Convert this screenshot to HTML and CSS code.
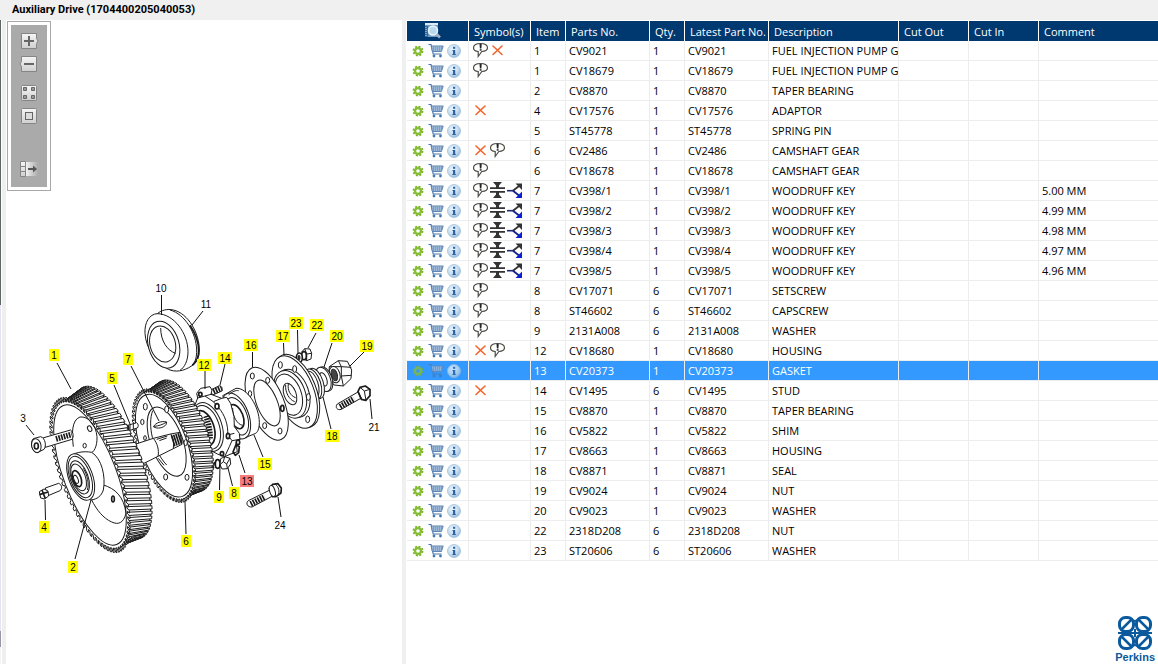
FILE: index.html
```html
<!DOCTYPE html>
<html lang="en">
<head>
<meta charset="utf-8">
<title>Auxiliary Drive</title>
<link rel="stylesheet" href="styles.css">
</head>
<body>
<svg class="defs" aria-hidden="true">
  <defs>
    <linearGradient id="tile" x1="0" y1="0" x2="0" y2="1"><stop offset="0" stop-color="#f6f6f6"/><stop offset="1" stop-color="#cfcfcf"/></linearGradient>
    <linearGradient id="fade" x1="0" y1="0" x2="1" y2="0"><stop offset="0" stop-color="#f2f2f2"/><stop offset="1" stop-color="#aaaaaa"/></linearGradient>
    <radialGradient id="ball" cx=".4" cy=".35" r=".7"><stop offset="0" stop-color="#eef6fb"/><stop offset=".6" stop-color="#c3dcee"/><stop offset="1" stop-color="#8fb6d6"/></radialGradient>
    <symbol id="i-gear" viewBox="0 0 18 18">
      <circle cx="9" cy="9" r="4.6" fill="none" stroke="#7ab32d" stroke-width="1.6" stroke-dasharray="2 1.61"/>
      <circle cx="9" cy="9" r="3" fill="none" stroke="#86bd35" stroke-width="2.4"/>
    </symbol>
    <symbol id="i-cart" viewBox="0 0 18 18">
      <path d="M1.500 2.500H4L6.200 12H14.500" fill="none" stroke="#4d78ac" stroke-width="1.200"/>
      <path d="M4.200 4H16.200L14.400 9.500H5.400Z" fill="#b9cde3" stroke="#5b83b3" stroke-width="1"/>
      <path d="M6.500 4V9.500M8.500 4V9.500M10.500 4V9.500M12.500 4V9.500M14.500 4V9.500M4.800 6H16M5 8H15" stroke="#6f94c0" stroke-width=".7"/>
      <circle cx="7" cy="14" r="1.400" fill="#4379b5"/><circle cx="13.500" cy="14" r="1.400" fill="#4379b5"/>
    </symbol>
    <symbol id="i-info" viewBox="0 0 18 18">
      <circle cx="9" cy="9" r="6.5" fill="url(#ball)" stroke="#a3c2da" stroke-width=".8"/>
      <rect x="8" y="4.8" width="2.2" height="2" fill="#2d63a8"/>
      <path d="M7.2 8H10.2V12.2H11V13H7.2V12.2H8V8.8H7.2Z" fill="#2d63a8"/>
    </symbol>
    <symbol id="i-note" viewBox="0 0 17 19">
      <path d="M8.500 2.500C4.500 2.500 1.500 4 1.500 6.700C1.500 9 3.600 10.200 6.200 10.500V15.500L9.800 10.500C13 10.200 15.500 9 15.500 6.700C15.500 4 12.500 2.500 8.500 2.500Z" fill="#fff" stroke="#4d4d45" stroke-width="1.200"/>
      <path d="M7.500 3H9.700L9.400 7.500H7.900Z" fill="#222"/><rect x="7.700" y="8.200" width="1.900" height="1.500" fill="#222"/>
    </symbol>
    <symbol id="i-cross" viewBox="0 0 17 19">
      <path d="M4 5L13 13.5M13 5L4 13.5" stroke="#f0642c" stroke-width="1.6" stroke-linecap="round"/>
    </symbol>
    <symbol id="i-press" viewBox="0 0 17 19">
      <path d="M4 1H13L10 4.500V7H7V4.500Z M4 17H13L10 13.500V11H7V13.500Z" fill="#333"/>
      <path d="M1 7.200H16M1 10.800H16" stroke="#333" stroke-width="1.700"/>
      <path d="M1 9H16" stroke="#fff" stroke-width="1.200"/>
    </symbol>
    <symbol id="i-branch" viewBox="0 0 17 19">
      <path d="M1 9.700H8" stroke="#1c2a78" stroke-width="1.600"/>
      <path d="M7 9.700L13 5" stroke="#333" stroke-width="1.800"/><path d="M7 9.700L13 14.500" stroke="#12208f" stroke-width="1.800"/>
      <path d="M9.500 2.500H16V9L14 7L12 5Z" fill="#333"/><path d="M9.500 17H16V10.500L14 12.500L12 14.500Z" fill="#0a1fd0"/>
    </symbol>
  </defs>
</svg>

<header class="titlebar"><h1 class="title">Auxiliary Drive (1704400205040053)</h1></header>
<main class="workspace">
  <div class="rail"><span class="rail-dark"></span><span class="rail-light"></span><span class="rail-mid"></span><span class="rail-end"></span></div>

  <section class="drawing" aria-label="Parts drawing">
    <svg class="plate" viewBox="6 20 396 644" preserveAspectRatio="xMinYMin meet">
      <!-- housings, seals and fasteners -->
      <g class="ink" transform="translate(130 270) scale(.33333)">
        <!-- ring 10 / 11 -->
        <path d="M45 190C43 158 58 132 82 131C95 120 112 116 130 120C175 130 208 190 208 240C208 262 201 278 186 287C160 305 135 307 115 298C75 275 47 232 45 190Z"/>
        <path class="line" d="M82 131C132 132 174 190 174 245C174 272 164 292 150 301M120 120C165 132 199 190 200 240C200 262 197 275 186 285"/>
        <ellipse cx="101" cy="224" rx="46" ry="72" transform="rotate(-16 101 224)"/>
        <ellipse cx="98" cy="222" rx="38" ry="55" transform="rotate(-15 98 222)"/>
        <path class="line" d="M92 174C92 213 112 242 137 250"/>
        <path class="heavy" d="M180 166C196 190 206 216 206 242C206 262 200 275 187 286"/>
        <!-- nut 19 -->
        <path d="M598 290L625 272L652 274L665 300L663 326L640 348L612 345L596 322Z"/>
        <path class="line" d="M625 272L634 290L664 292M634 290L634 318L640 348M634 318L664 316M598 290L634 290"/>
        <ellipse cx="614" cy="314" rx="16" ry="25" transform="rotate(-15 614 314)"/>
        <ellipse class="dark" cx="613" cy="315" rx="9" ry="18" transform="rotate(-15 613 315)"/>
        <!-- washer 20 and seal 18 -->
        <ellipse cx="585" cy="327" rx="21" ry="38" transform="rotate(-20 585 327)"/>
        <ellipse cx="580" cy="328" rx="21" ry="38" transform="rotate(-20 580 328)"/>
        <ellipse cx="580" cy="328" rx="10" ry="21" transform="rotate(-20 580 328)"/>
        <ellipse cx="558" cy="340" rx="22" ry="47" transform="rotate(-18 558 340)"/>
        <ellipse cx="550" cy="342" rx="22" ry="47" transform="rotate(-18 550 342)"/>
        <ellipse cx="547" cy="342" rx="17" ry="40" transform="rotate(-18 547 342)"/>
        <!-- nut 22 and washer 23 -->
        <path d="M516 245L524 236L540 237L545 250L543 267L530 272L518 265Z"/>
        <path class="line" d="M524 236L530 252L545 250M530 252L530 272"/>
        <ellipse class="heavy" cx="522" cy="257" rx="7" ry="12"/>
        <ellipse class="heavy" cx="508" cy="263" rx="9" ry="14"/>
        <ellipse class="dark" cx="507" cy="263" rx="3" ry="7"/>
        <!-- flange 17 -->
        <ellipse cx="500" cy="363" rx="58" ry="116" transform="rotate(-22 500 363)"/>
        <ellipse cx="494" cy="366" rx="57" ry="115" transform="rotate(-22 494 366)"/>
        <ellipse cx="489" cy="370" rx="47" ry="75" transform="rotate(-20 489 370)"/>
        <ellipse cx="480" cy="373" rx="46" ry="74" transform="rotate(-20 480 373)"/>
        <ellipse cx="476" cy="374" rx="38" ry="64" transform="rotate(-20 476 374)"/>
        <ellipse cx="480" cy="372" rx="18" ry="34" transform="rotate(-20 480 372)"/>
        <path class="line" d="M467 345C465 366 477 389 494 395M475 342C472 362 482 378 497 383"/>
        <ellipse cx="451" cy="285" rx="6" ry="10"/><ellipse cx="494" cy="297" rx="6" ry="10"/><ellipse cx="535" cy="381" rx="6" ry="10"/><ellipse cx="533" cy="448" rx="6" ry="10"/>
        <!-- gasket 16 -->
        <ellipse cx="410" cy="401" rx="52" ry="116" transform="rotate(-22 410 401)"/>
        <ellipse cx="411" cy="399" rx="31" ry="73" transform="rotate(-22 411 399)"/>
        <ellipse cx="367" cy="318" rx="6" ry="9"/><ellipse cx="413" cy="331" rx="6" ry="9"/><ellipse class="heavy" cx="457" cy="415" rx="5" ry="9"/><ellipse cx="450" cy="483" rx="6" ry="9"/><ellipse cx="404" cy="467" rx="6" ry="9"/><ellipse cx="360" cy="371" rx="5" ry="9"/>
        <!-- bearing 15 -->
        <path d="M278 377L318 355C350 352 388 408 388 458C388 478 382 488 375 491L343 504Z"/>
        <ellipse cx="318" cy="438" rx="38" ry="72" transform="rotate(-21 318 438)"/>
        <ellipse cx="320" cy="439" rx="31" ry="59" transform="rotate(-21 320 439)"/>
        <ellipse class="heavy" cx="319" cy="440" rx="20" ry="38" transform="rotate(-21 319 440)"/>
        <path class="line" d="M308 414C307 438 322 464 338 466M296 375C306 365 318 360 326 362"/>
        <!-- stud 14 -->
        <path d="M240 361L268 347L276 352V363L248 375Z"/>
        <path class="thread" d="M250 365L275 354"/>
        <!-- housing 12 -->
        <path d="M193 410L203 384L200 370L212 355L240 350L246 360L243 373L275 385L290 382L302 400L312 440L313 470L328 490L330 510L318 517L322 545L300 553L284 560L262 552L240 540L205 490Z"/>
        <path class="line" d="M203 384L225 378L243 373M225 378L250 395L275 385M250 395L265 412C285 435 295 465 293 495L313 490M293 495L306 512L330 508M306 512L298 530L284 560M205 368L218 379"/>
        <ellipse cx="233" cy="471" rx="43" ry="76" transform="rotate(-18 233 471)"/>
        <ellipse cx="230" cy="472" rx="38" ry="68" transform="rotate(-18 230 472)"/>
        <ellipse class="heavy" cx="223" cy="474" rx="29" ry="54" transform="rotate(-18 223 474)"/>
        <path class="thread" d="M228 438C235 458 241 485 240 505"/>
        <ellipse class="heavy" cx="211" cy="373" rx="5" ry="6"/><ellipse class="heavy" cx="261" cy="409" rx="6" ry="8"/><ellipse class="heavy" cx="294" cy="498" rx="5" ry="8"/><ellipse class="heavy" cx="276" cy="551" rx="5" ry="6"/><ellipse class="heavy" cx="324" cy="517" rx="5" ry="7"/>
        <!-- gasket lug 13 -->
        <path class="heavy" d="M318 524L328 530L326 548L316 556L309 546Z"/>
        <!-- nut 8, washer 9 -->
        <path class="thread" d="M246 588L272 578"/>
        <ellipse class="heavy" cx="263" cy="582" rx="7" ry="13"/>
        <path d="M272 566L284 560L300 565L302 582L292 596L276 597L270 584Z"/>
        <path class="line" d="M284 560L280 575L270 584M280 575L290 582L292 596M290 582L300 565"/>
        <!-- bolt 21 -->
        <path d="M622 402L684 366L694 384L634 418C622 422 614 412 622 402Z"/>
        <path class="thread" d="M630 410L672 386"/>
        <path class="heavy" d="M684 364L690 352L706 348L720 358L720 377L708 391L694 388Z"/>
        <path class="line" d="M690 352L703 363L720 358M703 363L708 391M684 364L694 388"/>
        <!-- bolt 24 -->
        <path d="M355 692L420 660L428 678L366 711C352 712 346 700 355 692Z"/>
        <path class="thread" d="M362 702L405 680"/>
        <path class="heavy" d="M418 656L428 643L444 641L454 654L453 669L438 680L428 680Z"/>
        <ellipse cx="427" cy="663" rx="8" ry="17" transform="rotate(-18 427 663)"/>
        <path class="line" d="M436 643C446 650 450 664 444 677"/>
      </g>

      <!-- gear train -->
      <g class="ink" transform="translate(20 340) scale(.33333)">
        <g id="gear-rear"></g>
        <ellipse cx="440" cy="305" rx="48" ry="109" transform="rotate(-20 440 305)"/>
        <path class="line" d="M398 212C382 255 398 330 440 375M415 355L432 376"/>
        <ellipse cx="376" cy="200" rx="6" ry="10"/><ellipse cx="367" cy="246" rx="5" ry="8"/><ellipse cx="375" cy="294" rx="4" ry="7"/><ellipse cx="440" cy="208" rx="6" ry="10"/><ellipse cx="437" cy="411" rx="6" ry="9"/><ellipse cx="501" cy="412" rx="6" ry="9"/><ellipse cx="497" cy="308" rx="5" ry="9"/>
        <!-- shaft -->
        <path d="M325 320L345 313L400 295L452 282L480 277L486 313L416 348L360 376L330 366Z"/>
        <path class="line" d="M345 313C358 330 364 350 360 376M400 295C412 310 418 330 414 349M410 298L442 288M418 302L440 294M452 282C460 292 463 308 460 324"/>
        <path class="spline" d="M457 303L485 294"/>
        <!-- key 7 -->
        <path d="M400 260C408 248 424 242 440 246L438 254C430 264 412 268 400 260Z"/><path class="line" d="M402 259C416 258 430 253 438 247"/>
        <!-- pin 5 -->
        <path d="M320 257L350 248C356 252 356 260 352 264L324 273Z"/><ellipse class="heavy" cx="322" cy="265" rx="4" ry="8"/><path class="line" d="M330 254V270M340 251V267"/>
        <g id="gear-front"></g>
        <!-- web pockets -->
        <path class="line" d="M160 320C155 280 155 240 180 231C205 228 228 255 231 290C232 320 222 338 208 341M250 435C285 445 312 470 318 520C310 550 295 555 275 546C250 535 230 510 215 480"/>
        <ellipse cx="209" cy="266" rx="6" ry="9" transform="rotate(-25 209 266)"/><ellipse cx="194" cy="317" rx="5" ry="7"/><ellipse class="heavy" cx="279" cy="477" rx="4" ry="9"/>
        <!-- hub bearing 2 -->
        <path d="M145 352C160 338 190 332 215 337C245 355 258 410 250 450C244 468 232 478 212 480Z"/>
        <ellipse cx="182" cy="411" rx="36" ry="73" transform="rotate(-20 182 411)"/>
        <ellipse cx="181" cy="411" rx="31" ry="65" transform="rotate(-20 181 411)"/>
        <ellipse cx="179" cy="412" rx="25" ry="52" transform="rotate(-20 179 412)"/>
        <ellipse cx="176" cy="412" rx="20" ry="42" transform="rotate(-20 176 412)"/>
        <ellipse class="heavy" cx="171" cy="416" rx="12" ry="25" transform="rotate(-20 171 416)"/>
        <ellipse cx="168" cy="418" rx="6" ry="13" transform="rotate(-20 168 418)"/>
        <path class="line" d="M190 385C202 405 208 432 202 450"/>
        <!-- bolt 3 -->
        <path d="M68 294L152 270C160 276 162 290 156 298L76 322Z"/>
        <path class="thread" d="M108 297L156 283"/>
        <path d="M40 296L62 290C76 294 80 318 72 328L52 338C34 334 30 306 40 296Z"/>
        <ellipse cx="49" cy="317" rx="14" ry="21" transform="rotate(-12 49 317)"/><ellipse class="heavy" cx="49" cy="318" rx="6" ry="9"/>
        <!-- screw 4 -->
        <path d="M76 444L116 430C126 434 128 446 120 452L82 468Z"/>
        <path d="M58 455L72 447L84 453L86 468L74 477L62 474Z"/><path class="heavy" d="M58 464L84 456M66 450L76 476"/>
      </g>

      <path class="leader" d="M57 363L71 389M26 425L34 435M45.500 520L45 500M75 559L91 500M114 385L130 424M131 366L159 421M186 534L185 501M161.500 295V315M203 311L192 325M205 371V389M225 364L220 385M252.500 352V367M283.500 343L284 355M297.500 330L298 353M316 333L308 348M332 343L324 367M364 352L350 366M331 429L323 397M263 457L254 435M245 473L239 455M232.500 486L228 468M219.500 490L220 464M372 419L370 399M281 517L278 497"/>
      <g id="callouts"></g>
    </svg>

    <div class="toolbox" role="toolbar" aria-label="Drawing tools">
      <button class="tool" aria-label="Zoom in"><svg viewBox="0 0 20 16"><path d="M2.500 .5H17.500V5.500L19 8L17.500 10.500V15.500H2.500Z" fill="url(#tile)" stroke="#858585"/><path d="M5 8H15M10 3V13" stroke="#666" stroke-width="2"/></svg></button>
      <button class="tool" aria-label="Zoom out"><svg viewBox="0 0 20 16"><path d="M2.500 .5H17.500V15.500H2.500V10.500L1 8L2.500 5.500Z" fill="url(#tile)" stroke="#858585"/><path d="M5 8H15" stroke="#666" stroke-width="2"/></svg></button>
      <button class="tool tool-gap" aria-label="Fit all"><svg viewBox="0 0 20 16"><rect x="2.500" y=".5" width="15" height="15" rx="1" fill="url(#tile)" stroke="#858585"/><path d="M4.500 2.500h3v3h-3zM12.500 2.500h3v3h-3zM4.500 10.500h3v3h-3zM12.500 10.500h3v3h-3z" fill="#999" stroke="#666"/></svg></button>
      <button class="tool" aria-label="Actual size"><svg viewBox="0 0 20 16"><rect x="2.500" y=".5" width="15" height="15" rx="1" fill="url(#tile)" stroke="#858585"/><rect x="6.500" y="4.500" width="7" height="7" fill="#ddd" stroke="#666"/></svg></button>
      <button class="tool tool-last" aria-label="Show list"><svg viewBox="0 0 20 16"><rect x="7" y="1" width="12" height="14" fill="url(#fade)"/><path d="M1.500 .5h5v5h-5zM1.500 5.500h5v5h-5zM1.500 10.500h5v5h-5z" fill="url(#tile)" stroke="#858585"/><path d="M9 8H15" stroke="#555" stroke-width="2"/><path d="M14 4.500L18 8L14 11.500Z" fill="#555"/></svg></button>
    </div>
  </section>

  <div class="splitter"></div>

  <section class="listing">
    <table class="parts">
      <colgroup><col class="w-act"><col class="w-act"><col class="w-num"><col class="w-part"><col class="w-num"><col class="w-part"><col class="w-desc"><col class="w-cut"><col class="w-cut"><col></colgroup>
      <thead>
        <tr>
          <th class="th-find"><button class="find" aria-label="Find parts"><svg viewBox="0 0 18 18"><path d="M1 1H14V15H1Z" fill="#6d9cc4"/><path d="M1 1H14V3H1Z" fill="#dceaf5"/><path d="M1 4H4V15H1Z" fill="#2c69a3"/><path d="M2 5V15" stroke="#cfe2f1" stroke-dasharray="1 1"/><circle cx="9" cy="8.500" r="4.500" fill="#b9d9ee" stroke="#eef5fa" stroke-width="1.500"/><path d="M12.500 12L16 15.500" stroke="#a3b4c4" stroke-width="2.500"/></svg></button></th>
          <th>Symbol(s)</th><th>Item</th><th>Parts No.</th><th>Qty.</th><th>Latest Part No.</th><th>Description</th><th>Cut Out</th><th>Cut In</th><th>Comment</th>
        </tr>
      </thead>
      <tbody id="rows"></tbody>
    </table>
    <div class="brand">
      <svg class="brand-mark" viewBox="0 0 36 36" aria-hidden="true">
        <g fill="none" stroke="#0b5a9e" stroke-width="3">
          <rect x="2.500" y="2.500" width="14" height="14" rx="6"/><rect x="19.500" y="2.500" width="14" height="14" rx="6"/><rect x="2.500" y="19.500" width="14" height="14" rx="6"/><rect x="19.500" y="19.500" width="14" height="14" rx="6"/>
          <path d="M5 14L14 5M22 5L31 14M5 22L14 31M22 31L31 22" stroke-width="2.500"/>
          <path d="M14 3Q18 9 22 3M14 33Q18 27 22 33" stroke-width="2"/>
          <path d="M1 18H35M18 14V22" stroke-width="2"/>
        </g>
      </svg>
      <span class="brand-name">Perkins</span>
    </div>
  </section>
</main>
<script src="script.js"></script>
</body>
</html>
```

FILE: styles.css
```css
* { box-sizing: border-box; }

body {
  margin: 0;
  min-height: 100vh;
  display: flex;
  flex-direction: column;
  background: #fff;
  color: #000;
  font: 11px/16px "Open Sans", "Noto Sans", sans-serif;
}

button {
  display: block;
  padding: 0;
  border: 0;
  background: none;
  cursor: pointer;
}

button svg { display: block; }

.defs {
  position: absolute;
  width: 0;
  height: 0;
}

.titlebar {
  height: 20px;
  padding: 2px 12px;
  background: #f0f0f0;
}

.title {
  margin: 0;
  font: bold 11px/16px Roboto, "Open Sans", sans-serif;
}

.workspace {
  flex: 1;
  display: flex;
}

/* window edge on the far left */
.rail {
  flex: none;
  width: 6px;
  display: flex;
  flex-direction: column;
  border-right: 4px solid #f0eff0;
}

.rail span { width: 1px; }
.rail-dark { flex: 285; background: #5c6665; }
.rail-light { flex: 326; background: #e6e4f2; }
.rail-mid { flex: 16; background: #9896a6; }
.rail-end { flex: 17; background: #f4f2f4; }

.drawing {
  position: relative;
  flex: 396 1 0;
  min-width: 0;
}

.plate {
  display: block;
  width: 100%;
  height: auto;
}

.ink {
  fill: #fff;
  stroke: #1a1a1a;
  stroke-width: 3;
  stroke-linejoin: round;
}

.ink .line { fill: none; }
.ink .heavy { stroke-width: 5; }
.ink path.heavy { fill: none; }
.ink .dark { fill: #444; }

.ink .thread {
  fill: none;
  stroke-width: 17;
  stroke-dasharray: 5 3;
}

.ink .spline {
  fill: none;
  stroke-width: 34;
  stroke-dasharray: 5 2;
}

.leader {
  fill: none;
  stroke: #111;
  stroke-width: 1;
}

.callout {
  font: 10px "Liberation Sans", Arial, sans-serif;
  text-anchor: middle;
}

.tag { fill: #ff0; }
.tag-active { fill: #f77c7c; }

.toolbox {
  position: absolute;
  top: 1px;
  left: 1px;
  width: 44px;
  height: 170px;
  padding: 11px 0 0;
  display: flex;
  flex-direction: column;
  align-items: center;
  gap: 7px;
  border: 1px solid #a8a8a8;
  background: #aaa;
  box-shadow: inset 0 0 0 3px #fff;
}

.tool svg {
  width: 20px;
  height: 16px;
}

.tool-gap { margin-top: 6px; }
.tool-last { margin-top: 30px; }

.splitter {
  flex: none;
  width: 5px;
  border-right: 1px solid #fff;
  background: #f0f0f0;
}

.listing {
  flex: 751 1 0;
  min-width: 0;
  padding-top: 1px;
  display: flex;
  flex-direction: column;
}

.parts {
  width: 100%;
  table-layout: fixed;
  border-collapse: separate;
  border-spacing: 0;
}

.w-act { width: 62px; }
.w-num { width: 35px; }
.w-part { width: 84px; }
.w-desc { width: 130px; }
.w-cut { width: 70px; }

.parts th,
.parts td {
  height: 20px;
  padding: 0 0 0 3px;
  overflow: hidden;
  white-space: nowrap;
  text-align: left;
  vertical-align: middle;
  line-height: 19px;
  border-right: 1px solid #ededed;
}

.parts td { border-bottom: 1px solid #ededed; }

.parts th {
  padding-left: 5px;
  background: #003870;
  color: #fff;
  font-weight: normal;
  border-right-color: #fff;
}

.parts th:last-child,
.parts td:last-child { border-right: 0; }

.find svg {
  width: 18px;
  height: 18px;
}

.parts .th-find { padding-left: 17px; }

.parts .actions { padding-left: 2px; }

.strip { display: flex; }

.act svg {
  width: 18px;
  height: 18px;
}

.symbol {
  width: 17px;
  height: 19px;
}

.parts .selected td {
  background: #3399ff;
  color: #fff;
}

.selected .act { opacity: 0.8; }

.brand {
  margin: auto 3px 0 0;
  align-self: flex-end;
  display: flex;
  flex-direction: column;
  align-items: center;
}

.brand-mark {
  width: 36px;
  height: 36px;
}

.brand-name {
  color: #0b5a9e;
  font: bold 11px/13px "Liberation Sans", Arial, sans-serif;
}
```

FILE: script.js
```js
const parts = [
  ["nc", 1, "CV9021", 1, "FUEL INJECTION PUMP G"],
  ["n", 1, "CV18679", 1, "FUEL INJECTION PUMP G"],
  ["", 2, "CV8870", 1, "TAPER BEARING"],
  ["c", 4, "CV17576", 1, "ADAPTOR"],
  ["", 5, "ST45778", 1, "SPRING PIN"],
  ["cn", 6, "CV2486", 1, "CAMSHAFT GEAR"],
  ["n", 6, "CV18678", 1, "CAMSHAFT GEAR"],
  ["npb", 7, "CV398/1", 1, "WOODRUFF KEY", "5.00 MM"],
  ["npb", 7, "CV398/2", 1, "WOODRUFF KEY", "4.99 MM"],
  ["npb", 7, "CV398/3", 1, "WOODRUFF KEY", "4.98 MM"],
  ["npb", 7, "CV398/4", 1, "WOODRUFF KEY", "4.97 MM"],
  ["npb", 7, "CV398/5", 1, "WOODRUFF KEY", "4.96 MM"],
  ["n", 8, "CV17071", 6, "SETSCREW"],
  ["n", 8, "ST46602", 6, "CAPSCREW"],
  ["n", 9, "2131A008", 6, "WASHER"],
  ["cn", 12, "CV18680", 1, "HOUSING"],
  ["", 13, "CV20373", 1, "GASKET"],
  ["c", 14, "CV1495", 6, "STUD"],
  ["", 15, "CV8870", 1, "TAPER BEARING"],
  ["", 16, "CV5822", 1, "SHIM"],
  ["", 17, "CV8663", 1, "HOUSING"],
  ["", 18, "CV8871", 1, "SEAL"],
  ["", 19, "CV9024", 1, "NUT"],
  ["", 20, "CV9023", 1, "WASHER"],
  ["", 22, "2318D208", 6, "NUT"],
  ["", 23, "ST20606", 6, "WASHER"]
];
const selectedItem = 13;
const symbols = { n: "note", c: "cross", p: "press", b: "branch" };
const actions = [["gear", "Options"], ["cart", "Add to cart"], ["info", "Information"]];

document.getElementById("rows").innerHTML = parts.map(([sym, item, no, qty, desc, comment = ""]) => `
  <tr${item === selectedItem ? ' class="selected"' : ""}>
    <td class="actions"><div class="strip">${actions.map(([icon, label]) =>
      `<button class="act" aria-label="${label} ${no}"><svg><use href="#i-${icon}"/></svg></button>`).join("")}</div></td>
    <td><div class="strip">${[...sym].map(s => `<svg class="symbol"><use href="#i-${symbols[s]}"/></svg>`).join("")}</div></td>
    <td>${item}</td><td>${no}</td><td>${qty}</td><td>${no}</td><td>${desc}</td><td></td><td></td><td>${comment}</td>
  </tr>`).join("");

// Helical gear: a front ellipse, a back ellipse shifted by (dx, dy), and teeth joining them.
function drawGear(id, g) {
  const tilt = g.tilt * Math.PI / 180;
  const at = (t, k, s) => {
    const x = g.rx * k * Math.cos(t), y = g.ry * k * Math.sin(t);
    return [
      g.cx + x * Math.cos(tilt) - y * Math.sin(tilt) + g.dx * s,
      g.cy + x * Math.sin(tilt) + y * Math.cos(tilt) + g.dy * s
    ].map(v => v.toFixed(1)).join(" ");
  };
  const step = 2 * Math.PI / g.teeth;
  const ellipse = (k, s) => {
    const cx = g.cx + g.dx * s, cy = g.cy + g.dy * s;
    return `<ellipse cx="${cx}" cy="${cy}" rx="${g.rx * k}" ry="${g.ry * k}" transform="rotate(${g.tilt} ${cx} ${cy})"/>`;
  };
  let out = ellipse(0.97, 1);
  for (let i = 0; i < g.teeth; i++) {
    const t = -Math.PI * 0.62 + i * step;
    if (t > Math.PI * 0.55) break;
    out += `<path d="M${at(t, 0.97, 0)}L${at(t + g.twist, 1.01, 1)}L${at(t + g.twist + step * 0.6, 1.01, 1)}L${at(t + step * 0.6, 0.97, 0)}Z"/>`;
  }
  let rim = "";
  for (let i = 0; i < g.teeth; i++) {
    const t = i * step;
    rim += `${i ? "L" : "M"}${at(t, 1.03, 0)}L${at(t + step * 0.4, 1.03, 0)}L${at(t + step * 0.5, 0.97, 0)}L${at(t + step * 0.9, 0.97, 0)}`;
  }
  out += `<path d="${rim}Z"/>` + ellipse(0.93, 0);
  document.getElementById(id).innerHTML = out;
}
drawGear("gear-rear", { cx: 432, cy: 317, rx: 75, ry: 174, tilt: -20, dx: 55, dy: -30, teeth: 64, twist: 0.16 });
drawGear("gear-front", { cx: 210, cy: 405, rx: 85, ry: 240, tilt: -21, dx: 68, dy: -38, teeth: 72, twist: 0.16 });

const callouts = [
  [1, 54, 355], [5, 112, 378], [7, 128, 359], [12, 204, 365], [14, 225, 358], [16, 251, 345],
  [17, 283, 336], [23, 296, 323], [22, 317, 325], [20, 337, 336], [19, 367, 346], [18, 332, 436],
  [15, 265, 464], [13, 247, 481], [8, 234, 493], [9, 219, 497], [6, 186, 541], [2, 73, 567], [4, 44, 527],
  [3, 23, 418, true], [10, 161, 288, true], [11, 206, 304, true], [21, 374, 427, true], [24, 280, 525, true]
];
document.getElementById("callouts").innerHTML = callouts.map(([n, x, y, plain]) => {
  const w = n > 9 ? 14 : 10;
  const box = plain ? "" : `<rect class="tag${n === selectedItem ? " tag-active" : ""}" x="${x - w / 2}" y="${y - 6}" width="${w}" height="12"/>`;
  return `${box}<text class="callout" x="${x}" y="${y + 4}">${n}</text>`;
}).join("");
```
